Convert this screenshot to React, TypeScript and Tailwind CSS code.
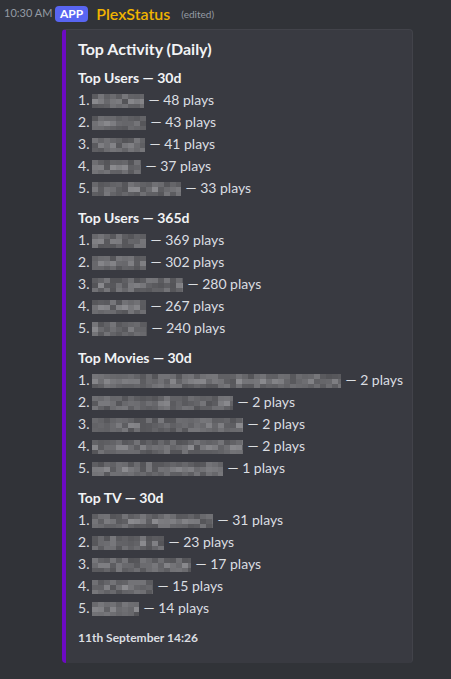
import React from "react";

type Row = { w: number; plays: number };

interface Section {
  title: string;
  rows: Row[];
}

const sections: Section[] = [
  {
    title: "Top Users — 30d",
    rows: [
      { w: 52, plays: 48 },
      { w: 54, plays: 43 },
      { w: 53, plays: 41 },
      { w: 49, plays: 37 },
      { w: 89, plays: 33 },
    ],
  },
  {
    title: "Top Users — 365d",
    rows: [
      { w: 54, plays: 369 },
      { w: 54, plays: 302 },
      { w: 91, plays: 280 },
      { w: 54, plays: 267 },
      { w: 55, plays: 240 },
    ],
  },
  {
    title: "Top Movies — 30d",
    rows: [
      { w: 249, plays: 2 },
      { w: 141, plays: 2 },
      { w: 151, plays: 2 },
      { w: 151, plays: 2 },
      { w: 131, plays: 1 },
    ],
  },
  {
    title: "Top TV — 30d",
    rows: [
      { w: 121, plays: 31 },
      { w: 72, plays: 23 },
      { w: 99, plays: 17 },
      { w: 61, plays: 15 },
      { w: 47, plays: 14 },
    ],
  },
];

// pixelated placeholder for redacted names
function Redacted({ w, seed }: { w: number; seed: number }) {
  const cols = Math.ceil(w / 6);
  const cells: string[] = [];
  let s = seed * 9301 + 49297;
  for (let r = 0; r < 3; r++) {
    for (let c = 0; c < cols; c++) {
      s = (s * 9301 + 49297) % 233280;
      const v = 84 + Math.floor((s / 233280) * (r === 1 ? 56 : 36));
      cells.push(`rgb(${v},${v},${v + 4})`);
    }
  }
  return (
    <span
      className="inline-grid align-middle ml-[3px] mr-[4px] h-[14px] overflow-hidden"
      style={{ width: w, gridTemplateColumns: `repeat(${cols}, 6px)`, gridTemplateRows: "repeat(3, 5px)" }}
    >
      {cells.map((bg, i) => (
        <span key={i} style={{ background: bg }} />
      ))}
    </span>
  );
}

export default function App() {
  return (
    <div
      className="min-h-screen w-full bg-[#313338] text-[#dbdee1]"
      style={{ fontFamily: 'Lato, "Noto Sans", sans-serif' }}
    >
      <div className="flex items-center h-[29px] pl-[4px] pb-[2px]">
        <span className="text-[11px] text-[#949ba4] w-[51px]">10:30 AM</span>
        <span className="bg-[#5865f2] text-white text-[12px] font-bold leading-[16px] rounded-[4px] px-[5px] mr-[8px]">
          APP
        </span>
        <span className="text-[16px] font-semibold text-[#f0b400] leading-[20px]">PlexStatus</span>
        <span className="text-[10px] text-[#949ba4] ml-[11px] mt-[2px]">(edited)</span>
      </div>

      <div className="ml-[62px] w-[351px] bg-[#393a41] rounded-[4px] border-l-4 border-[#6d0ac4] border-t border-r border-t-[#42434a] border-r-[#42434a] pl-[12px] pr-[16px] pt-[8px] pb-[17px]">
        <div className="text-[16px] font-bold text-[#f2f3f5] leading-[22px]">Top Activity (Daily)</div>

        {sections.map((sec, si) => (
          <div key={sec.title} className={si === 0 ? "mt-[7px]" : "mt-[8px]"}>
            <div className="text-[14px] font-bold text-[#f2f3f5] leading-[22px]">{sec.title}</div>
            {sec.rows.map((r, i) => (
              <div key={i} className="text-[14px] leading-[22px] whitespace-nowrap">
                {i + 1}.
                <Redacted w={r.w} seed={si * 10 + i + 3} />— {r.plays} plays
              </div>
            ))}
          </div>
        ))}

        <div className="mt-[11px] text-[12px] font-bold text-[#dbdee1] leading-[16px]">11th September 14:26</div>
      </div>
    </div>
  );
}
